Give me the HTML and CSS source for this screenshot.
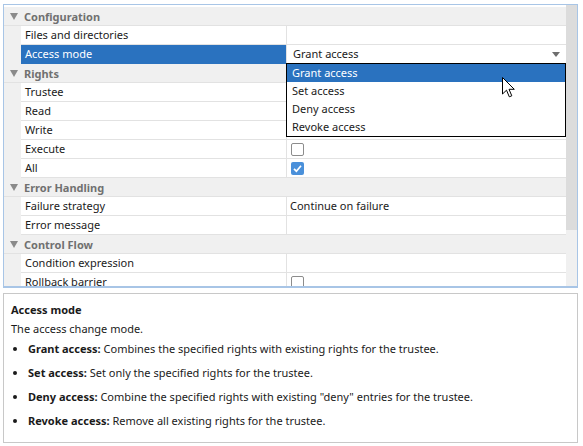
FILE: index.html
```html
<!DOCTYPE html>
<html lang="en">
<head>
    <meta charset="UTF-8">
    <title>Properties</title>
    <link rel="stylesheet" href="styles.css">
</head>
<body>
    <div class="grid">
        <div class="rows">
            <div class="group"><span class="caret"></span>Configuration</div>
            <div class="row"><div class="name">Files and directories</div><div class="value"></div></div>
            <div class="row selected"><div class="name">Access mode</div><div class="value">Grant access<span class="drop-arrow"></span></div></div>
            <div class="group"><span class="caret"></span>Rights</div>
            <div class="row"><div class="name">Trustee</div><div class="value"></div></div>
            <div class="row"><div class="name">Read</div><div class="value"></div></div>
            <div class="row"><div class="name">Write</div><div class="value"></div></div>
            <div class="row"><div class="name">Execute</div><div class="value"><span class="check"></span></div></div>
            <div class="row"><div class="name">All</div><div class="value"><span class="check on">
                <svg width="13" height="13" viewBox="0 0 13 13"><path d="M3 6.8 L5.4 9.2 L10 3.8" fill="none" stroke="#fff" stroke-width="1.7"/></svg>
            </span></div></div>
            <div class="group"><span class="caret"></span>Error Handling</div>
            <div class="row"><div class="name">Failure strategy</div><div class="value">Continue on failure</div></div>
            <div class="row"><div class="name">Error message</div><div class="value"></div></div>
            <div class="group"><span class="caret"></span>Control Flow</div>
            <div class="row"><div class="name">Condition expression</div><div class="value"></div></div>
            <div class="row"><div class="name">Rollback barrier</div><div class="value"><span class="check"></span></div></div>

            <ul class="dropdown">
                <li class="active">Grant access</li>
                <li>Set access</li>
                <li>Deny access</li>
                <li>Revoke access</li>
            </ul>
            <svg class="pointer" width="14" height="22" viewBox="0 0 14 22">
                <path d="M0.5 0.5 L0.5 17 L4.5 13.2 L7.3 19.8 L9.8 18.8 L7 12.3 L12.3 12.3 Z" fill="#fff" stroke="#000" stroke-width="1"/>
            </svg>
        </div>
        <div class="scrollbar"><div class="thumb"></div></div>
    </div>

    <div class="help">
        <div class="help-title">Access mode</div>
        <p>The access change mode.</p>
        <ul>
            <li><b>Grant access:</b> Combines the specified rights with existing rights for the trustee.</li>
            <li><b>Set access:</b> Set only the specified rights for the trustee.</li>
            <li><b>Deny access:</b> Combine the specified rights with existing "deny" entries for the trustee.</li>
            <li><b>Revoke access:</b> Remove all existing rights for the trustee.</li>
        </ul>
    </div>
</body>
</html>
```

FILE: styles.css
```css
body {
    margin: 0;
    font-family: "Noto Sans", sans-serif;
    font-size: 11px;
    color: #1a1a1a;
    background: #fff;
}
.grid {
    display: flex;
    height: 281px;
    margin: 4px 5px 0 3px;
    border: 1px solid #a8c5e6;
    border-bottom-width: 2px;
    overflow: hidden;
}
.rows {
    position: relative;
    flex: 1;
    padding-top: 2px;
    overflow: hidden;
}
.group {
    display: flex;
    align-items: center;
    height: 18px;
    border-bottom: 1px solid #e2e2e2;
    background: #f0f0f0;
    color: #707070;
    font-weight: bold;
}
.caret {
    width: 0;
    height: 0;
    margin: 0 6px 0 6px;
    border-left: 4px solid transparent;
    border-right: 4px solid transparent;
    border-top: 7px solid #8a8a8a;
}
.row {
    display: flex;
    height: 19px;
    padding-left: 17px;
    background: #f0f0f0;
}
.name {
    width: 261px;
    padding-left: 4px;
    line-height: 18px;
    background: #fff;
    border-right: 1px solid #e2e2e2;
    border-bottom: 1px solid #e2e2e2;
}
.value {
    position: relative;
    flex: 1;
    padding-left: 3px;
    line-height: 18px;
    background: #fff;
    border-bottom: 1px solid #e2e2e2;
}
.selected .name {
    background: #2a72bf;
    color: #fff;
    border-bottom-color: #2a72bf;
}
.selected .value {
    padding-left: 6px;
}
.drop-arrow {
    position: absolute;
    right: 6px;
    top: 7px;
    border-left: 4px solid transparent;
    border-right: 4px solid transparent;
    border-top: 5px solid #6e6e6e;
}
.check {
    display: inline-block;
    box-sizing: border-box;
    width: 13px;
    height: 13px;
    margin-top: 3px;
    margin-left: 1px;
    vertical-align: top;
    border: 1px solid #8c8c8c;
    border-radius: 2px;
    background: #fff;
}
.check.on {
    border: none;
    background: #4a90da;
}
.check svg {
    display: block;
}
.dropdown {
    position: absolute;
    left: 282px;
    top: 58px;
    width: 278px;
    margin: 0;
    padding: 0;
    list-style: none;
    background: #fff;
    border: 1px solid #000;
}
.dropdown li {
    height: 18px;
    line-height: 18px;
    padding-left: 5px;
}
.dropdown li.active {
    background: #2a72bf;
    color: #fff;
}
.pointer {
    position: absolute;
    left: 498px;
    top: 72px;
}
.scrollbar {
    width: 11px;
    background: #f0f0f0;
}
.thumb {
    height: 225px;
    background: #dcdcdc;
}
.help {
    height: 141px;
    margin: 5px 5px 0 3px;
    padding: 7px 7px 0;
    border: 1px solid #c8c8c8;
}
.help-title {
    font-weight: bold;
    line-height: 18px;
}
.help p {
    margin: 1px 0 0;
    line-height: 18px;
}
.help ul {
    margin: 2px 0 0;
    padding-left: 17px;
}
.help li {
    line-height: 18px;
    margin-bottom: 6px;
}
```
